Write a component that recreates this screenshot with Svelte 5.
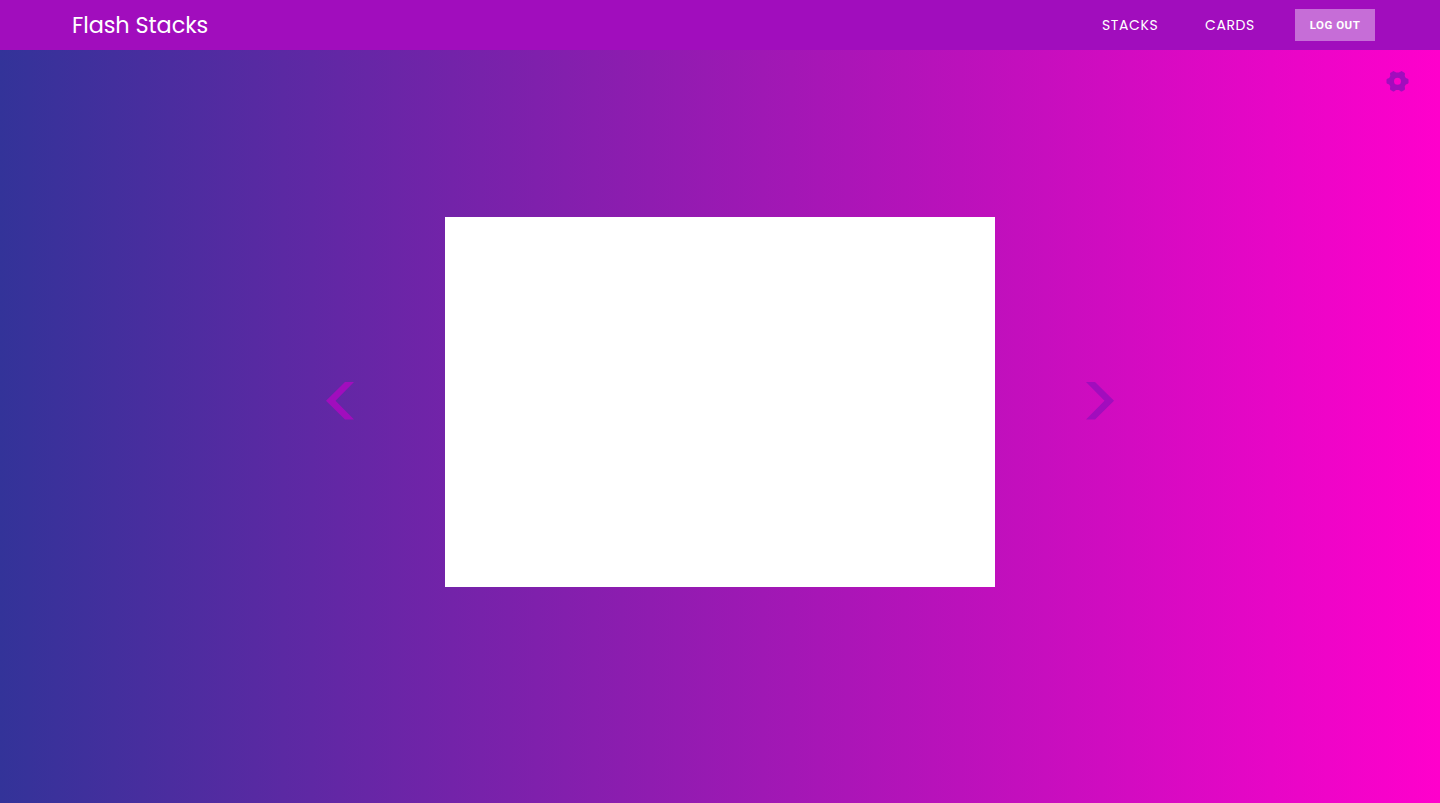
<script>
  const links = ['STACKS', 'CARDS'];
</script>

<div class="page">
  <header>
    <h1>Flash Stacks</h1>
    <nav>
      {#each links as link}
        <a href="#top" class:second={link === 'CARDS'}>{link}</a>
      {/each}
      <button class="logout">LOG OUT</button>
    </nav>
  </header>
  <div class="tools">
    <button class="plain" aria-label="Settings">
      <svg width="24" height="24" viewBox="-12.5 -12.3 24 24">
        <path fill-rule="evenodd" d="M-8.3 -3.2L-7.2 -5.2L-7.5 -7.5Q-7.5 -8.2 -6.9 -8.6L-4.4 -10.1Q-3.7 -10.4 -3.2 -9.9L-1.4 -8.7H1.4L3.2 -9.9Q3.7 -10.4 4.4 -10.1L6.9 -8.6Q7.5 -8.2 7.5 -7.5L7.2 -5.2L8.3 -3.2L10.3 -2.5Q11 -2.2 11 -1.5V1.5Q11 2.2 10.3 2.5L8.3 3.2L7.2 5.2L7.5 7.5Q7.5 8.2 6.9 8.6L4.4 10.1Q3.7 10.4 3.2 9.9L1.4 8.7H-1.4L-3.2 9.9Q-3.7 10.4 -4.4 10.1L-6.9 8.6Q-7.5 8.2 -7.5 7.5L-7.2 5.2L-8.3 3.2L-10.3 2.5Q-11 2.2 -11 1.5V-1.5Q-11 -2.2 -10.3 -2.5ZM-3.5 0a3.5 3.5 0 1 0 7 0a3.5 3.5 0 1 0 -7 0" />
      </svg>
    </button>
  </div>
  <main>
    <button class="plain" aria-label="Previous">
      <svg width="28" height="38" viewBox="0 0 28 38"><path d="M19 0H28L9.5 18.7L28 37.4H19L0 18.7Z" /></svg>
    </button>
    <section class="card"></section>
    <button class="plain" aria-label="Next">
      <svg width="28" height="38" viewBox="0 0 28 38"><path d="M9 0H0L18.5 18.7L0 37.4H9L28 18.7Z" /></svg>
    </button>
  </main>
</div>

<style>
  :global(body) { margin: 0; }
  .page {
    height: 803px;
    display: flex;
    flex-direction: column;
    background: linear-gradient(to right, #333399, #ff00cc);
    font-family: Poppins, Inter, sans-serif;
  }
  header {
    height: 50px;
    box-sizing: border-box;
    padding: 0 65px 0 72px;
    display: flex;
    align-items: center;
    justify-content: space-between;
    background: #a10dbd;
    color: #fff;
  }
  h1 { margin: 0; font-size: 22.4px; font-weight: 400; letter-spacing: -.08px; line-height: 50px; }
  nav { display: flex; align-items: center; }
  a { width: 103px; color: #fff; text-decoration: none; font-size: 14px; font-weight: 400; letter-spacing: .6px; }
  a.second { width: 90px; }
  button { border: 0; padding: 0; font-family: Inter, sans-serif; }
  .logout {
    width: 80px;
    height: 32px;
    background: rgba(255, 255, 255, .4);
    color: #fff;
    font-family: Roboto, sans-serif;
    font-size: 11.5px;
    font-weight: 700;
    letter-spacing: .5px;
  }
  .plain { display: block; background: none; }
  svg { display: block; fill: #a10dbd; }
  .tools { height: 44px; padding: 19px 31px 0 0; box-sizing: border-box; display: flex; justify-content: flex-end; }
  .tools svg { margin-top: -1px; }
  main { display: flex; justify-content: center; align-items: center; gap: 91px; margin-top: 123px; }
  main svg { margin-bottom: 2px; }
  .card { width: 550px; height: 370px; background: #fff; }
</style>
